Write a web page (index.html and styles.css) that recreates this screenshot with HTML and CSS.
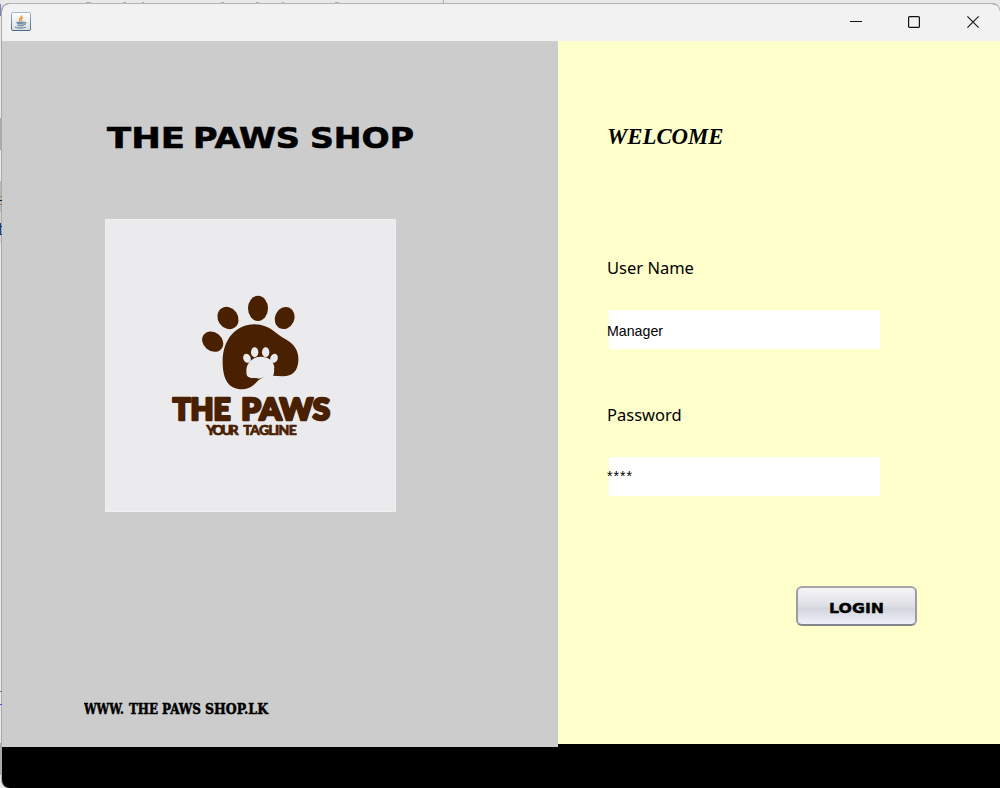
FILE: index.html
```
<!DOCTYPE html>
<html lang="en">
<head>
<meta charset="utf-8">
<title>The Paws Shop</title>
<link rel="stylesheet" href="styles.css">
</head>
<body>
<div class="backdrop">
  <svg class="behind" width="1000" height="788" aria-hidden="true">
    <path d="M86 3h5M123 3h3M142 3h2M221 3h3M256 3h3M282 3h2M335 3h4" stroke="#777"/>
    <path d="M443.500 0v4" stroke="#b4a2b8"/>
    <path d="M0 4h1v12H0z" fill="#7288bd"/><path d="M0 118h1v32H0z" fill="#aaa"/>
    <path d="M0 181h1v31H0z" fill="#b8b8b8"/><path d="M0 212h1v31H0z" fill="#d9d4bd"/>
    <path d="M0 743h1v32H0z" fill="#aaa"/>
  </svg>
  <main class="window">
    <header class="titlebar">
      <svg class="java" width="20" height="20" viewBox="0 0 20 20">
        <defs>
          <linearGradient id="jb" x1="0" y1="0" x2="0" y2="1"><stop stop-color="#9fb9d2"/><stop offset="1" stop-color="#456a8a"/></linearGradient>
          <linearGradient id="jf" x1="0" y1="0" x2="0" y2="1"><stop stop-color="#fff"/><stop offset="1" stop-color="#dedede"/></linearGradient>
        </defs>
        <rect x=".5" y=".5" width="19" height="18" rx="1.500" fill="url(#jf)" stroke="url(#jb)"/>
        <path d="M10.500 3.500c1 2-3 2.500-2 4.500l1 1.500M12 5.500c-2 .8-2.300 2-1 3.500" fill="none" stroke="#f09a4b" stroke-width="1.500"/>
        <path d="M5.500 10.500h8M6 11.500h6.500M6.500 13.500h6M13 10.500c2.500-.5 2 2-.5 2.300M4 15c2 1.300 9 1.300 11 0" fill="none" stroke="#6f91ac" stroke-width="1.300"/>
      </svg>
      <div class="controls">
        <svg width="12" height="12"><path d="M0 5.500h12" stroke="#111"/></svg>
        <svg width="12" height="12"><rect x=".6" y=".6" width="10.800" height="10.800" rx="1" fill="none" stroke="#111" stroke-width="1.200"/></svg>
        <svg class="close" width="12" height="12"><path d="M.4.4l11.200 11.200M11.600.4L.4 11.600" stroke="#111" stroke-width="1.100"/></svg>
      </div>
    </header>
    <div class="content">
      <section class="brand">
        <svg class="shop-name" width="314" height="40">
          <text x="1" y="31" textLength="78" lengthAdjust="spacingAndGlyphs">THE</text>
          <text x="87" y="31" textLength="107" lengthAdjust="spacingAndGlyphs">PAWS</text>
          <text x="204" y="31" textLength="104" lengthAdjust="spacingAndGlyphs">SHOP</text>
        </svg>
        <svg class="logo" width="291" height="293">
          <g transform="translate(54 65) scale(.33333)">
            <g fill="#492000">
              <ellipse cx="294" cy="70" rx="30" ry="38"/>
              <ellipse cx="204" cy="99" rx="30" ry="35" transform="rotate(-35 204 99)"/>
              <ellipse cx="374" cy="99" rx="29" ry="34" transform="rotate(25 374 99)"/>
              <ellipse cx="158" cy="170" rx="28" ry="34" transform="rotate(-50 158 170)"/>
              <path d="M188 235C186 164 228 117 285 118C329 119 344 145 377 163C406 180 417 200 415 229C413 260 395 275 367 274L339 272L343 246C340 226 323 214 301 215C275 216 260 237 260 270C267 280 278 281 314 277C289 281 286 310 248 313C207 314 189 286 188 235Z"/>
            </g>
            <g fill="#ebebed">
              <path d="M262 272C251 242 273 217 302 217C332 219 351 244 339 273C326 276 308 276 296 281C284 277 268 280 262 272Z"/>
              <ellipse cx="284" cy="202" rx="11" ry="15"/><ellipse cx="317" cy="202" rx="11" ry="15"/>
              <ellipse cx="261" cy="220" rx="11" ry="14" transform="rotate(-25 261 220)"/><ellipse cx="342" cy="220" rx="11" ry="14" transform="rotate(25 342 220)"/>
            </g>
            <g class="logo-name">
              <text x="38" y="404" textLength="174" lengthAdjust="spacingAndGlyphs">THE</text>
              <text x="244" y="404" textLength="266" lengthAdjust="spacingAndGlyphs">PAWS</text>
            </g>
            <g class="logo-tag">
              <text x="139" y="451" textLength="97" lengthAdjust="spacing">YOUR</text>
              <text x="250" y="451" textLength="160" lengthAdjust="spacing">TAGLINE</text>
            </g>
          </g>
        </svg>
        <svg class="site" width="194" height="28">
          <text x="0" y="19" textLength="40" lengthAdjust="spacingAndGlyphs">WWW.</text>
          <text x="45" y="19" textLength="29" lengthAdjust="spacingAndGlyphs">THE</text>
          <text x="78" y="19" textLength="39" lengthAdjust="spacingAndGlyphs">PAWS</text>
          <text x="121" y="19" textLength="63" lengthAdjust="spacingAndGlyphs">SHOP.LK</text>
        </svg>
      </section>
      <form class="login">
        <h1 class="welcome">WELCOME</h1>
        <label class="label label-user">User Name</label>
        <div class="field"><span class="value">Manager</span></div>
        <label class="label label-pass">Password</label>
        <div class="field field-pass"><span class="value value-pass">****</span></div>
        <button class="submit" type="button"><svg width="58" height="24"><text x="1" y="18" textLength="55" lengthAdjust="spacingAndGlyphs">LOGIN</text></svg></button>
      </form>
    </div>
  </main>
  <svg class="edge" width="2" height="788" aria-hidden="true">
    <path d="M0 196.500h2M0 204.500h2" stroke="#b97842"/><path d="M0 200.500h2M0 226.500h2M0 234.500h2" stroke="#123"/>
    <path d="M0 223h1v12H0z" fill="#0b4399"/><path d="M0 691.500h2" stroke="#778"/><path d="M0 704.500h2" stroke="#4550c0"/>
  </svg>
</div>
</body>
</html>
```
FILE: styles.css
```
* { box-sizing: border-box; }
body { margin: 0; overflow: hidden; }
svg { display: block; flex: none; }
.backdrop { position: relative; width: 1000px; height: 788px; padding: 3px 0 0 1px; background: #e8e8e9; }
.behind, .edge { position: absolute; left: 0; top: 0; }
.window { position: relative; height: 785px; overflow: hidden; background: #000; border-top: 1px solid #b4b4b4; border-left: 1px solid #aaa; border-radius: 8px 8px 0 8px; }
.titlebar { height: 37px; display: flex; justify-content: space-between; align-items: flex-start; padding: 8px 21px 0 9px; background: #f2f2f2; }
.controls { display: flex; gap: 46px; padding: 4px 0 0; }
.close { margin-left: 1px; }
.content { display: flex; align-items: flex-start; }
.brand { width: 556px; height: 706px; background: #ccc; padding: 76px 0 0 82px; }
.shop-name { margin-left: 22px; font: bold 29px "DejaVu Sans", sans-serif; stroke: #000; stroke-width: .6px; }
.logo { margin: 62px 0 0 21px; background: #ebebed; border: 1px solid #f0f0f1; }
.logo-name { font: 900 93px Lato, sans-serif; fill: #492000; stroke: #492000; stroke-width: 8px; stroke-linejoin: round; }
.logo-tag { font: 900 42px Lato, sans-serif; fill: #492000; stroke: #492000; stroke-width: 2px; stroke-linejoin: round; }
.site { margin-top: 183px; font: bold 14px "DejaVu Serif", serif; stroke: #000; stroke-width: .5px; }
.login { width: 442px; height: 703px; background: #ffc; padding: 83px 0 0 49px; display: flex; flex-direction: column; align-items: flex-start; }
.welcome { margin: 0; font: italic bold 22.8px/25px "Liberation Serif", serif; }
.label { font: 16.5px/24px "Noto Sans", sans-serif; }
.label-user { margin-top: 107px; }
.label-pass { margin-top: 54px; }
.field { width: 271px; height: 39px; margin: 30px 0 0 2px; padding-top: 2px; background: #fff; display: flex; align-items: center; }
.field-pass { padding: 0 0 2px; }
.value { margin-left: -2px; font: 14.2px/18px "Liberation Sans", sans-serif; }
.value-pass { letter-spacing: 1px; }
.submit { width: 121px; height: 40px; margin: 90px 0 0 189px; padding: 2px 0 0; display: flex; align-items: center; justify-content: center; border: 2px solid #9b9ca4; border-top-color: #a7a7ab; border-bottom-color: #85868c; border-radius: 6px; background: linear-gradient(#f5f5f8, #dfe0e6 48%, #d3d6de 58%, #eff1f9); font: bold 14.5px "DejaVu Sans", sans-serif; color: #000; stroke: #000; stroke-width: .4px; }
```
